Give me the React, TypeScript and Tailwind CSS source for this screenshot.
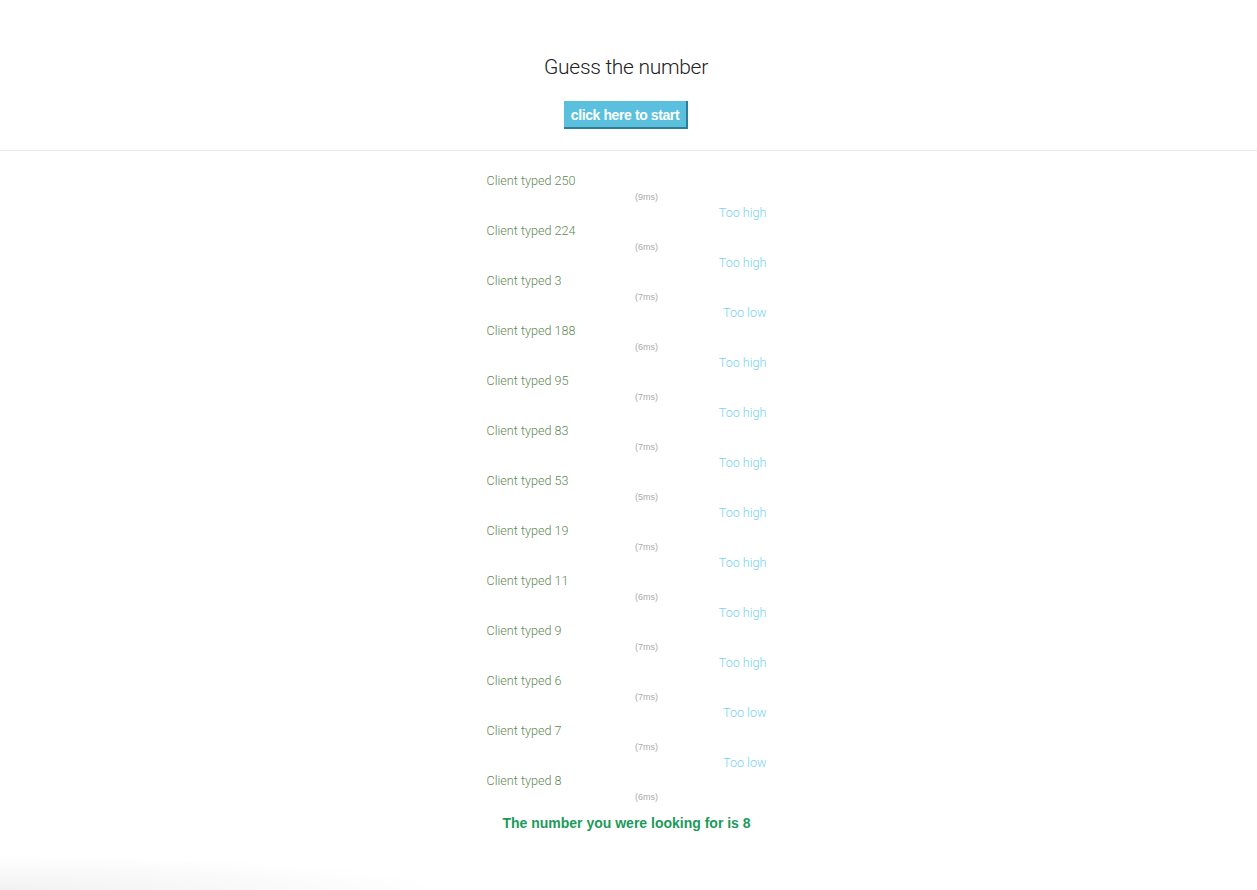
import React from "react";

const entries: { n: number; ms: number; res?: string }[] = [
  { n: 250, ms: 9, res: "Too high" },
  { n: 224, ms: 6, res: "Too high" },
  { n: 3, ms: 7, res: "Too low" },
  { n: 188, ms: 6, res: "Too high" },
  { n: 95, ms: 7, res: "Too high" },
  { n: 83, ms: 7, res: "Too high" },
  { n: 53, ms: 5, res: "Too high" },
  { n: 19, ms: 7, res: "Too high" },
  { n: 11, ms: 6, res: "Too high" },
  { n: 9, ms: 7, res: "Too high" },
  { n: 6, ms: 7, res: "Too low" },
  { n: 7, ms: 7, res: "Too low" },
  { n: 8, ms: 6 },
];

const light = { fontFamily: 'Roboto, "Liberation Sans", sans-serif', fontWeight: 300 };

export default function App() {
  return (
    <div
      className="relative min-h-[890px] bg-white"
      style={{ fontFamily: '"Liberation Sans", Arial, sans-serif' }}
    >
      <header className="flex flex-col items-center border-b border-[#ececec] pt-[55px] pb-[21px] pr-[5px]">
        <h1 className="text-[21px] leading-[24px] text-[#222] tracking-[-0.3px]" style={light}>
          Guess the number
        </h1>
        <button className="mt-[22px] h-[28px] bg-[#5bc0de] border-r-2 border-b-2 border-[#2e7f96] px-[7px] text-[14px] font-bold text-white leading-[28px] tracking-[-0.4px]">
          click here to start
        </button>
      </header>
      <main className="mx-auto w-[280px] pt-[21px] translate-x-[-2px]">
        {entries.map((e, i) => (
          <div key={i} className="flex flex-col">
            <div className="h-[18px] text-[12.6px] leading-[18px] text-[#5f8a55]" style={light}>
              Client typed {e.n}
            </div>
            <div className="h-[14px] pl-[40px] text-center text-[9px] leading-[14px] text-[#aaaaaa]">
              ({e.ms}ms)
            </div>
            {e.res && (
              <div className="h-[18px] text-right text-[12.6px] leading-[18px] text-[#78d2f4]" style={light}>
                {e.res}
              </div>
            )}
          </div>
        ))}
        <div className="mt-[9px] text-center text-[14px] font-bold leading-[20px] text-[#1c9a5c]">
          The number you were looking for is 8
        </div>
      </main>
      <div className="pointer-events-none absolute left-0 top-[855px] h-[35px] w-[450px] bg-[radial-gradient(ellipse_100%_100%_at_0%_100%,rgba(0,0,0,0.05),rgba(0,0,0,0))]" />
    </div>
  );
}
